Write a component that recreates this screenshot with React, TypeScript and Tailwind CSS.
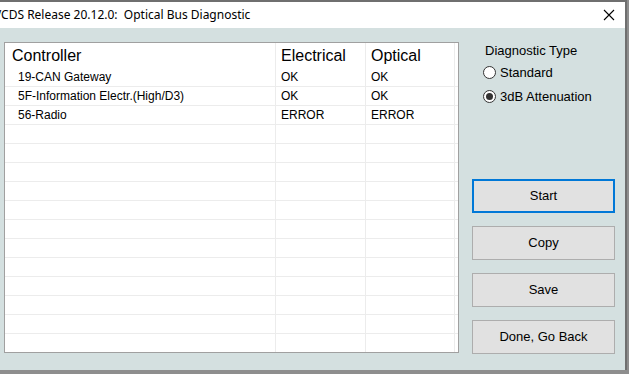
const rows: [string, string, string][] = [
  ["19-CAN Gateway", "OK", "OK"],
  ["5F-Information Electr.(High/D3)", "OK", "OK"],
  ["56-Radio", "ERROR", "ERROR"],
];

const EMPTY_ROWS = 12;

function Radio({ checked, label }: { checked?: boolean; label: string }) {
  return (
    <div className="flex items-center gap-[4px] h-[18px]">
      <span className="flex items-center justify-center w-[13px] h-[13px] rounded-full border border-[#333] bg-white">
        {checked && <span className="w-[7px] h-[7px] rounded-full bg-[#333]" />}
      </span>
      <span className="text-[13px] text-black">{label}</span>
    </div>
  );
}

function Btn({ label, focused }: { label: string; focused?: boolean }) {
  return (
    <button
      className={
        "w-[143px] h-[34px] bg-[#e1e1e1] text-[13px] text-black " +
        (focused ? "border-2 border-[#0078d7]" : "border border-[#adadad]")
      }
    >
      {label}
    </button>
  );
}

export default function App() {
  const blank = Array.from({ length: EMPTY_ROWS });
  return (
    <div
      className="w-[629px] h-[374px] overflow-hidden bg-[#8e8e8e] flex flex-col"
      style={{ fontFamily: '"Liberation Sans", Arial, sans-serif' }}
    >
      <div className="w-[627px] h-[370px] flex flex-col border-t-2 border-r-2 border-[#6f6f6f] bg-[#d4e0e0]">
        {/* Title bar */}
        <div className="h-[26px] bg-white flex items-center justify-between pr-[10px]">
          <span
            className="ml-[-6px] text-[12px] text-black whitespace-nowrap"
            style={{ fontFamily: '"Noto Sans", sans-serif' }}
          >
            VCDS Release 20.12.0:&nbsp; Optical Bus Diagnostic
          </span>
          <svg width="12" height="12" viewBox="0 0 12 12" className="text-black">
            <path d="M1 1 L11 11 M11 1 L1 11" stroke="currentColor" strokeWidth="1.1" />
          </svg>
        </div>

        <div className="flex pt-[14px] pl-[4px]">
          {/* Table */}
          <div className="w-[455px] h-[311px] bg-white border border-[#a0a0a0] overflow-hidden">
            <div className="flex h-[25px] items-center text-[16px] text-black">
              <div className="w-[271px] pl-[7px] h-full flex items-center border-r border-[#ececec]">Controller</div>
              <div className="w-[90px] pl-[5px] h-full flex items-center border-r border-[#ececec]">Electrical</div>
              <div className="w-[89px] pl-[5px] h-full flex items-center border-r border-[#ececec]">Optical</div>
            </div>
            {rows.map((r) => (
              <div key={r[0]} className="flex h-[19px] text-[12px] text-black border-b border-[#ececec]">
                <div className="w-[271px] pl-[13px] flex items-center border-r border-[#ececec]">{r[0]}</div>
                <div className="w-[90px] pl-[5px] flex items-center border-r border-[#ececec]">{r[1]}</div>
                <div className="w-[89px] pl-[5px] flex items-center border-r border-[#ececec]">{r[2]}</div>
              </div>
            ))}
            {blank.map((_, i) => (
              <div key={i} className="flex h-[19px] border-b border-[#ececec]">
                <div className="w-[271px] border-r border-[#ececec]" />
                <div className="w-[90px] border-r border-[#ececec]" />
                <div className="w-[89px] border-r border-[#ececec]" />
              </div>
            ))}
          </div>

          {/* Right panel */}
          <div className="flex flex-col pl-[13px]">
            <div className="pl-[13px] mt-[-1px] text-[13px] text-black">Diagnostic Type</div>
            <div className="flex flex-col gap-[6px] pl-[11px] mt-[3px]">
              <Radio label="Standard" />
              <Radio checked label="3dB Attenuation" />
            </div>
            <div className="flex flex-col gap-[13px] mt-[73px]">
              <Btn label="Start" focused />
              <Btn label="Copy" />
              <Btn label="Save" />
              <Btn label="Done, Go Back" />
            </div>
          </div>
        </div>
      </div>
    </div>
  );
}
